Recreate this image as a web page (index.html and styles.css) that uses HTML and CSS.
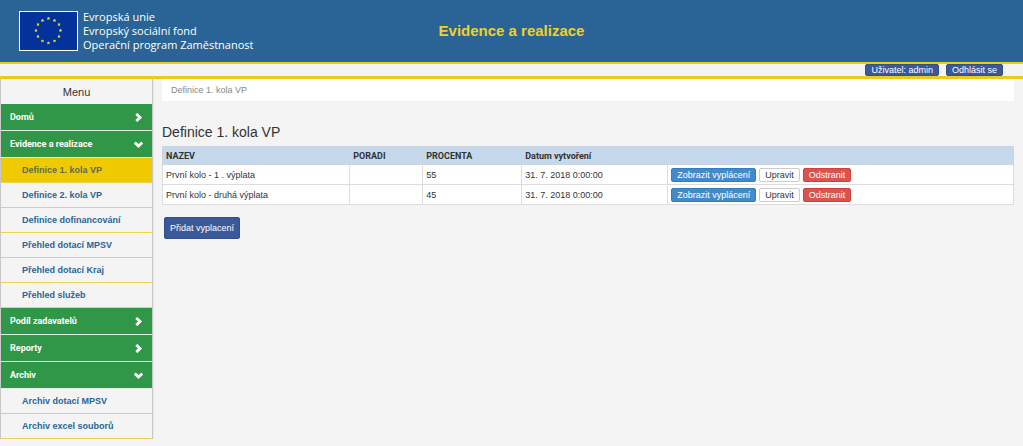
FILE: index.html
```html
<!DOCTYPE html>
<html lang="cs">
<head>
<meta charset="utf-8">
<title>Evidence a realizace</title>
<link rel="stylesheet" href="styles.css">
</head>
<body>
<svg class="defs" aria-hidden="true">
  <symbol id="right" viewBox="0 0 8 8"><path d="M2 .8 5.4 4 2 7.2" fill="none" stroke="#fff" stroke-width="2.5"/></symbol>
  <symbol id="down" viewBox="0 0 8 8"><path d="M.7 2.3 4 5.4 7.3 2.3" fill="none" stroke="#fff" stroke-width="2.5"/></symbol>
  <symbol id="star" viewBox="-1 -1 2 2"><path d="M0-1 .24-.32.95-.31.38.12.59.81 0 .4-.59.81-.38.12-.95-.31-.24-.32Z" fill="#f7e017" stroke="#f7e017" stroke-width=".3"/></symbol>
</svg>
<header class="header">
  <div class="brand">
    <svg class="flag" viewBox="0 0 59 40" role="img" aria-label="Evropská unie">
      <rect x=".5" y=".5" width="58" height="39" fill="#03329b" stroke="#fff"/>
      <use href="#star" x="28" y="6" width="3" height="3"/>
      <use href="#star" x="34" y="8" width="3" height="3"/>
      <use href="#star" x="38.5" y="12" width="3" height="3"/>
      <use href="#star" x="40" y="18" width="3" height="3"/>
      <use href="#star" x="38.5" y="24" width="3" height="3"/>
      <use href="#star" x="34" y="28.5" width="3" height="3"/>
      <use href="#star" x="28" y="30.5" width="3" height="3"/>
      <use href="#star" x="22" y="28.5" width="3" height="3"/>
      <use href="#star" x="17.5" y="24" width="3" height="3"/>
      <use href="#star" x="15.5" y="18" width="3" height="3"/>
      <use href="#star" x="17.5" y="12" width="3" height="3"/>
      <use href="#star" x="22" y="8" width="3" height="3"/>
    </svg>
    <p class="brand-text">Evropská unie<br>Evropský sociální fond<br>Operační program Zaměstnanost</p>
  </div>
  <h1 class="title">Evidence a realizace</h1>
</header>
<div class="userbar">
  <button class="btn btn-navy btn-user" type="button">Uživatel: admin</button>
  <button class="btn btn-navy btn-user" type="button">Odhlásit se</button>
</div>
<div class="layout">
  <nav class="sidebar">
    <h2 class="menu-title">Menu</h2>
    <a class="group" href="#">Domů<svg class="chevron"><use href="#right"/></svg></a>
    <a class="group" href="#">Evidence a realizace<svg class="chevron"><use href="#down"/></svg></a>
    <div class="submenu">
      <a class="sub active" href="#">Definice 1. kola VP</a>
      <a class="sub" href="#">Definice 2. kola VP</a>
      <a class="sub" href="#">Definice dofinancování</a>
      <a class="sub" href="#">Přehled dotací MPSV</a>
      <a class="sub" href="#">Přehled dotací Kraj</a>
      <a class="sub" href="#">Přehled služeb</a>
    </div>
    <a class="group" href="#">Podíl zadavatelů<svg class="chevron"><use href="#right"/></svg></a>
    <a class="group" href="#">Reporty<svg class="chevron"><use href="#right"/></svg></a>
    <a class="group" href="#">Archiv<svg class="chevron"><use href="#down"/></svg></a>
    <div class="submenu">
      <a class="sub" href="#">Archiv dotací MPSV</a>
      <a class="sub" href="#">Archiv excel souborů</a>
    </div>
  </nav>
  <main class="content">
    <div class="breadcrumb">Definice 1. kola VP</div>
    <h2 class="heading">Definice 1. kola VP</h2>
    <table class="grid">
      <colgroup><col class="c-name"><col class="c-order"><col class="c-percent"><col class="c-date"><col></colgroup>
      <thead><tr><th>NAZEV</th><th>PORADI</th><th>PROCENTA</th><th>Datum vytvoření</th><th></th></tr></thead>
      <tbody>
        <tr><td>První kolo - 1 . výplata</td><td></td><td>55</td><td>31. 7. 2018 0:00:00</td>
          <td><div class="actions"><button class="btn btn-blue" type="button">Zobrazit vyplácení</button><button class="btn btn-plain" type="button">Upravit</button><button class="btn btn-red" type="button">Odstranit</button></div></td></tr>
        <tr><td>První kolo - druhá výplata</td><td></td><td>45</td><td>31. 7. 2018 0:00:00</td>
          <td><div class="actions"><button class="btn btn-blue" type="button">Zobrazit vyplácení</button><button class="btn btn-plain" type="button">Upravit</button><button class="btn btn-red" type="button">Odstranit</button></div></td></tr>
      </tbody>
    </table>
    <button class="btn btn-navy btn-add" type="button">Přidat vyplacení</button>
  </main>
</div>
</body>
</html>
```
FILE: styles.css
```css
* { box-sizing: border-box; }
body {
  margin: 0;
  background: #f4f4f4;
  color: #333;
  font: 9px/12px "Liberation Sans", Arial, sans-serif;
}
h1, h2, p { margin: 0; font-weight: normal; }
a { text-decoration: none; }
.defs { position: absolute; width: 0; height: 0; }

.header {
  display: grid;
  grid-template-columns: 1fr auto 1fr;
  align-items: center;
  padding: 10px 0;
  background: #2a6496;
  border-bottom: 2px solid #eccb19;
}
.brand { display: flex; align-items: center; gap: 5px; padding-left: 19px; }
.flag { width: 59px; height: 40px; }
.brand-text {
  color: #fff;
  font: 11px/14px "Open Sans", "Noto Sans", sans-serif;
  white-space: nowrap;
}
.title { color: #efd02b; font-size: 15px; line-height: 20px; font-weight: bold; }

.userbar {
  display: flex;
  justify-content: flex-end;
  gap: 7px;
  padding-right: 20px;
  border-bottom: 3px solid #eccb19;
}

.btn {
  border: 1px solid transparent;
  border-radius: 2px;
  padding: 0 5px;
  font: 9px/12px "Liberation Sans", Arial, sans-serif;
  color: #fff;
  white-space: nowrap;
}
.btn-navy { background: #3b5998; border-color: #334f8c; }
.btn-user { line-height: 10px; }
.btn-blue { background: #428bca; border-color: #357ebd; }
.btn-plain { background: #fff; border-color: #ccc; color: #333; }
.btn-red { background: #d9534f; border-color: #d43f3a; }
.btn-add { margin: 12px 2px; padding: 4px 5px; }

.layout { display: flex; align-items: flex-start; }
.sidebar {
  flex: 0 0 153px;
  border: solid #c8c8c8;
  border-width: 0 1px;
  box-shadow: 0 1px 1px #aaa;
}
.menu-title { padding: 5px 0 4px; font-size: 11px; line-height: 16px; text-align: center; }
.group {
  display: flex;
  align-items: center;
  justify-content: space-between;
  padding: 7px 9px;
  background: #2f9747;
  border-bottom: 1px solid #e4f0e6;
  color: #fff;
  font: bold 9px/12px Roboto, "Liberation Sans", sans-serif;
}
.chevron { width: 9px; height: 9px; }
.sub {
  display: block;
  padding: 6px 21px;
  border-bottom: 1px solid #ecd34f;
  color: #2a6496;
  font-weight: bold;
}
.active { background: #f0ca00; color: #5f6b4c; }

.content { flex: 1; padding: 0 9px; }
.breadcrumb { padding: 5px 9px; background: #fff; color: #888; }
.heading { margin-top: 21px; font-size: 14px; line-height: 20px; }
.grid {
  width: 100%;
  margin-top: 4px;
  table-layout: fixed;
  border-collapse: collapse;
  background: #fff;
}
.grid th, .grid td { border: 1px solid #ddd; padding: 2px 3px; text-align: left; height: 20px; }
.grid th {
  height: 18px;
  background: #c6d8eb;
  border-color: #ccd6e0;
  font-family: Roboto, "Liberation Sans", sans-serif;
}
.c-name { width: 22%; }
.c-order { width: 73px; }
.c-percent { width: 99px; }
.c-date { width: 146px; }
.actions { display: flex; gap: 3px; }
```
